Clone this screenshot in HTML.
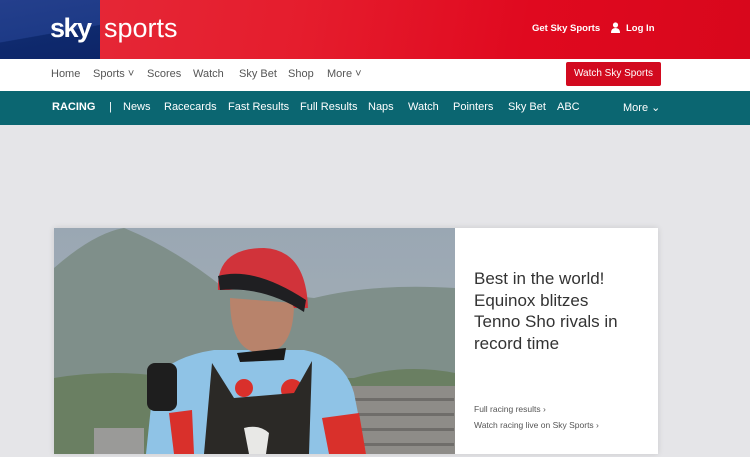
<!DOCTYPE html>
<html><head><meta charset="utf-8"><style>
*{margin:0;padding:0;box-sizing:border-box}
body{width:750px;height:457px;overflow:hidden;background:#e5e5e8;font-family:"Liberation Sans",sans-serif}
.top{position:absolute;left:0;top:0;width:750px;height:59px;background:linear-gradient(100deg,#e52b3a 0%,#e51d2d 40%,#e0091f 70%,#d8071c 100%)}
.blue{position:absolute;left:0;top:0;width:100px;height:59px;background:linear-gradient(170deg,#243f8c 0%,#1d3a86 55%,#0f2a6e 56%,#0d2568 100%)}
.logo{position:absolute;top:13px;color:#fff;font-size:27px}
.nav{position:absolute;top:59px;left:0;width:750px;height:32px;background:#fff}
.nav span{position:absolute;top:9px;font-size:11px;color:#555}
.teal{position:absolute;top:91px;left:0;width:750px;height:34px;background:#0b6671}
.teal span{position:absolute;top:10px;font-size:11px;color:#fff}
.card{position:absolute;left:54px;top:228px;width:604px;height:226px;background:#fff;box-shadow:0 0 6px rgba(0,0,0,.12)}
</style></head><body>
<div class="top"></div><div class="blue"></div>
<div class="logo" style="left:50px;font-weight:bold;letter-spacing:-1.5px">sky</div>
<div class="logo" style="left:104px">sports</div>
<div style="position:absolute;left:532px;top:23px;color:#fff;font-size:9.5px;font-weight:bold">Get Sky Sports</div>
<svg style="position:absolute;left:611px;top:22px" width="9" height="11" viewBox="0 0 9 11"><circle cx="4.5" cy="3" r="2.6" fill="#fff"/><path d="M0 11 Q0 6 4.5 6 Q9 6 9 11Z" fill="#fff"/></svg>
<div style="position:absolute;left:626px;top:23px;color:#fff;font-size:9.5px;font-weight:bold">Log In</div>
<div class="nav">
<span style="left:51px">Home</span><span style="left:93px">Sports ˅</span><span style="left:147px">Scores</span><span style="left:193px">Watch</span><span style="left:239px">Sky Bet</span><span style="left:288px">Shop</span><span style="left:327px">More ˅</span>
<div style="position:absolute;left:566px;top:3px;width:95px;height:24px;background:#d20a1f;border-radius:2px;color:#fff;font-size:10px;text-align:center;line-height:24px">Watch Sky Sports</div>
</div>
<div class="teal">
<span style="left:52px;font-weight:bold">RACING</span><span style="left:109px">|</span><span style="left:123px">News</span><span style="left:164px">Racecards</span><span style="left:228px">Fast Results</span><span style="left:300px">Full Results</span><span style="left:368px">Naps</span><span style="left:408px">Watch</span><span style="left:453px">Pointers</span><span style="left:508px">Sky Bet</span><span style="left:557px">ABC</span><span style="left:623px">More ⌄</span>
</div>
<div class="card">
<svg width="401" height="226" viewBox="0 0 401 226" style="position:absolute;left:0;top:0">
<defs><linearGradient id="sk" x1="0" y1="0" x2="0" y2="1"><stop offset="0" stop-color="#9aa7b3"/><stop offset="1" stop-color="#a9b3b8"/></linearGradient></defs>
<rect width="401" height="226" fill="url(#sk)"/>
<path d="M0 40 Q40 5 70 0 Q120 20 170 60 L260 70 Q320 55 401 60 L401 160 L0 160Z" fill="#7f8f8a"/>
<path d="M0 150 Q60 140 120 150 L300 150 Q350 135 401 145 L401 226 L0 226Z" fill="#6a7f62"/>
<rect x="295" y="158" width="106" height="68" fill="#8e8c88"/>
<g fill="#6f6d6a"><rect x="300" y="170" width="100" height="3"/><rect x="300" y="185" width="100" height="3"/><rect x="300" y="200" width="100" height="3"/><rect x="300" y="215" width="100" height="3"/></g>
<rect x="40" y="200" width="50" height="26" fill="#9a9a98"/>
<path d="M92 226 L100 150 Q120 128 160 122 L250 122 Q290 130 300 165 L312 226Z" fill="#8fc3e6"/>
<path d="M115 185 L138 182 L140 226 L120 226Z" fill="#d9302b"/>
<path d="M268 190 L305 185 L312 226 L275 226Z" fill="#d9302b"/>
<circle cx="190" cy="160" r="9" fill="#d9302b"/><circle cx="238" cy="162" r="11" fill="#d9302b"/>
<rect x="93" y="135" width="30" height="48" rx="8" fill="#1e1e1e"/>
<path d="M176 70 Q176 125 208 125 Q240 125 240 75 Z" fill="#b8836b"/>
<path d="M183 125 L232 120 L230 132 L186 134Z" fill="#1a1a1a"/>
<path d="M164 62 Q162 20 210 20 Q252 22 254 80 L240 80 Q230 55 175 62Z" fill="#d1333a"/>
<path d="M164 48 Q200 38 252 72 L250 84 Q210 58 166 62Z" fill="#1f1f22"/>
<path d="M150 226 L158 135 L180 170 L240 165 L258 133 L255 226Z" fill="#2b2926"/>
<path d="M190 200 Q205 196 215 205 L212 226 L195 226Z" fill="#e8e8e6"/>
</svg>
<div style="position:absolute;left:420px;top:40px;width:152px;font-size:17px;line-height:21.5px;color:#333">Best in the world! Equinox blitzes Tenno Sho rivals in record time</div>
<div style="position:absolute;left:420px;top:176px;font-size:8.5px;color:#555">Full racing results ›</div>
<div style="position:absolute;left:420px;top:192px;font-size:8.5px;color:#555">Watch racing live on Sky Sports ›</div>
</div>
</body></html>
